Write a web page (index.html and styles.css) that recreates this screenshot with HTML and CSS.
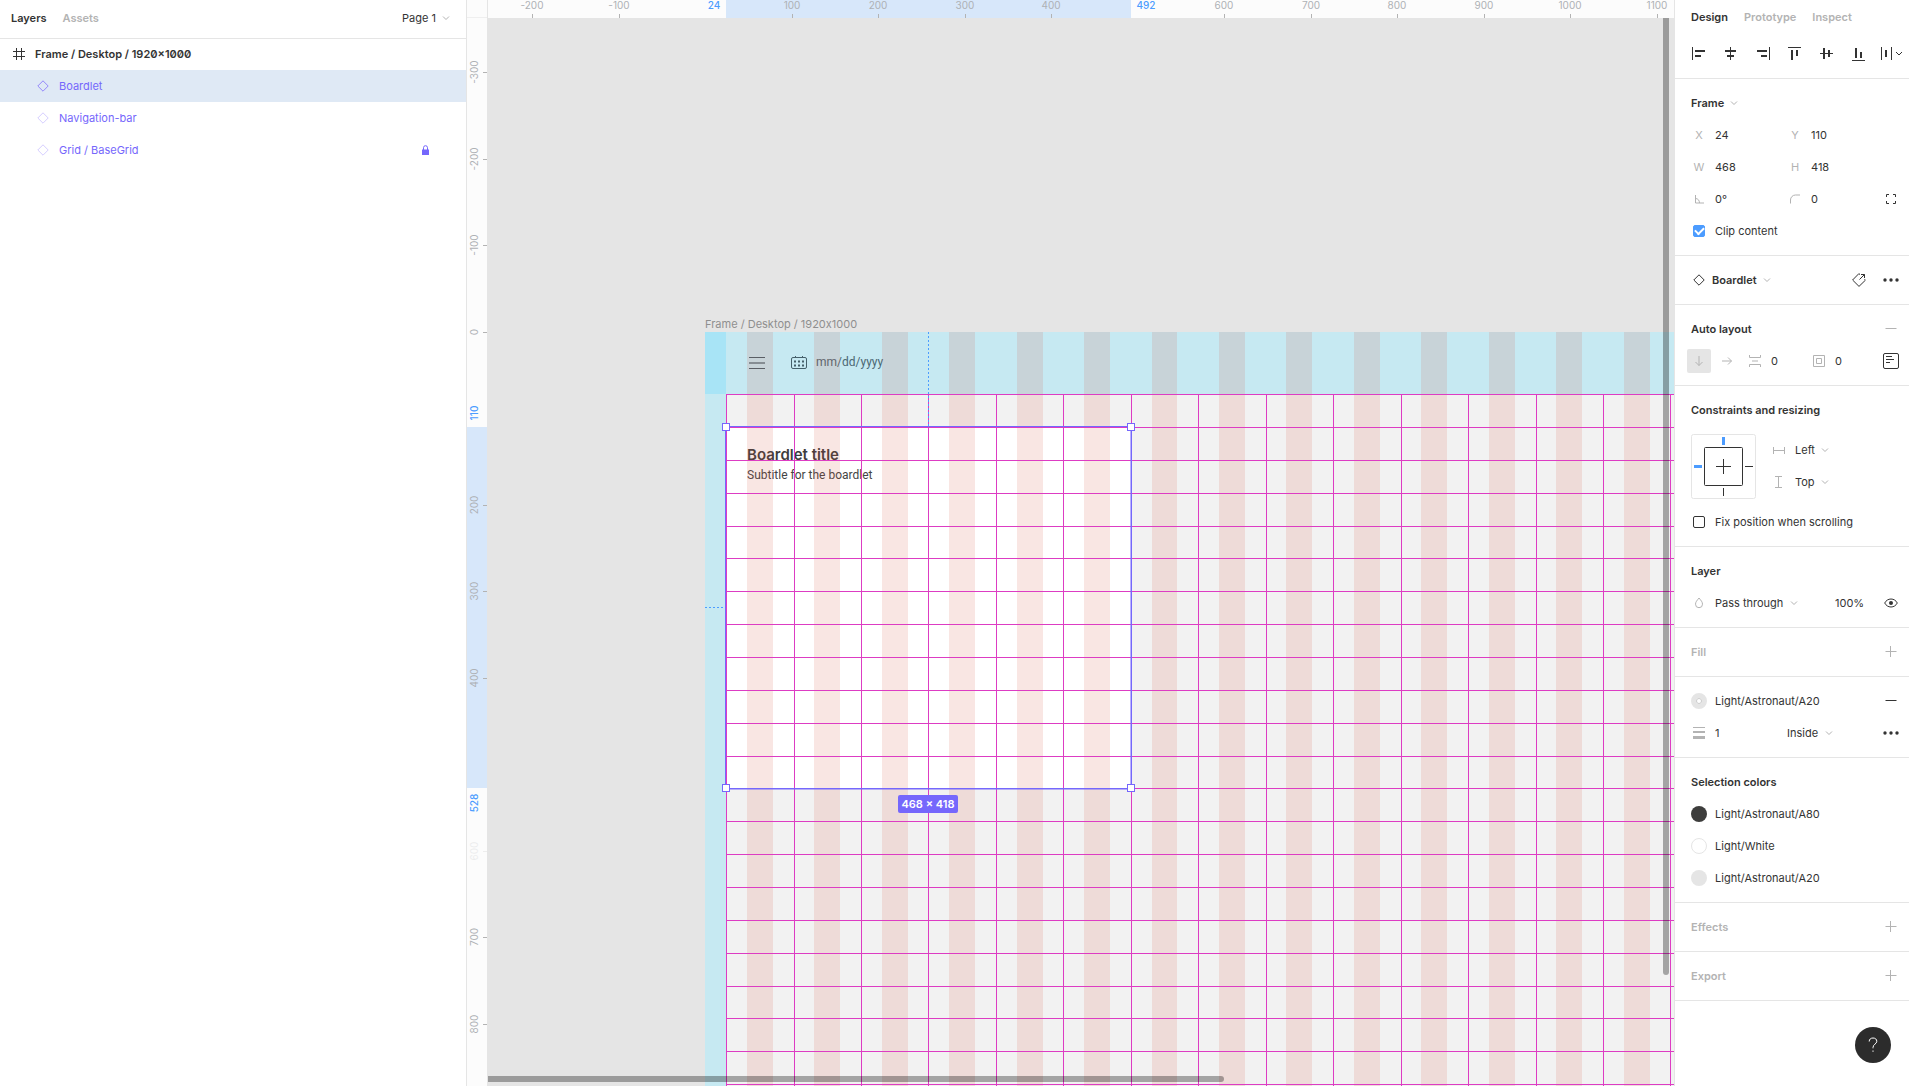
FILE: index.html
```html
<!DOCTYPE html>
<html lang="en">
<head>
<meta charset="utf-8">
<title>Frame / Desktop</title>
<link rel="stylesheet" href="styles.css">
</head>
<body>
<div class="app">

  <aside class="layers">
    <header class="layers-head">
      <div class="tabs">
        <button class="tab tab-on">Layers</button>
        <button class="tab">Assets</button>
      </div>
      <button class="drop">Page 1 <svg class="chev" viewBox="0 0 8 8"><path d="M1 2.500l3 3 3-3"/></svg></button>
    </header>
    <ul class="tree">
      <li class="node node-root">
        <svg class="ico s12" viewBox="0 0 12 12"><path d="M3.500 0v12M8.500 0v12M0 3.500h12M0 8.500h12"/></svg>
        <span>Frame / Desktop / 1920×1000</span>
      </li>
      <li class="node node-on">
        <svg class="ico s12" viewBox="0 0 12 12"><path d="M6 .8L11.200 6 6 11.200.8 6z"/></svg>
        <span>Boardlet</span>
      </li>
      <li class="node">
        <svg class="ico s12" viewBox="0 0 12 12"><path d="M6 .8L11.200 6 6 11.200.8 6z"/></svg>
        <span>Navigation-bar</span>
      </li>
      <li class="node">
        <svg class="ico s12" viewBox="0 0 12 12"><path d="M6 .8L11.200 6 6 11.200.8 6z"/></svg>
        <span>Grid / BaseGrid</span>
        <svg class="lock" viewBox="0 0 7 10"><path class="lock-body" d="M0 4.500h7V10H0z"/><path d="M1.500 5V2.700a2 2 0 0 1 4 0V5"/></svg>
      </li>
    </ul>
  </aside>

  <main class="stage">
    <div class="corner"></div>
    <div class="ruler ruler-h">
      <svg class="fill">
        <rect class="r-range" x="239" y="0" width="405" height="18"/>
        <path class="r-tick" d="M45.500 14v4M132.500 14v4M305.500 14v4M391.500 14v4M478.500 14v4M564.500 14v4M737.500 14v4M824.500 14v4M910.500 14v4M997.500 14v4M1083.500 14v4M1170.500 14v4"/>
        <g class="r-num">
          <text x="45" y="9">-200</text><text x="132" y="9">-100</text>
          <text x="305" y="9">100</text><text x="391" y="9">200</text><text x="478" y="9">300</text><text x="564" y="9">400</text>
          <text x="737" y="9">600</text><text x="824" y="9">700</text><text x="910" y="9">800</text><text x="997" y="9">900</text><text x="1083" y="9">1000</text><text x="1170" y="9">1100</text>
        </g>
        <g class="r-num r-sel"><text x="227" y="9">24</text><text x="659" y="9">492</text></g>
      </svg>
    </div>
    <div class="ruler">
      <svg class="fill">
        <rect class="r-range" x="0" y="409" width="20" height="361"/>
        <path class="r-tick" d="M16 54.500h4M16 141.500h4M16 227.500h4M16 314.500h4M16 487.500h4M16 573.500h4M16 660.500h4M16 919.500h4M16 1006.500h4"/>
        <path class="r-tick r-faint" d="M16 833.500h4"/>
        <g class="r-num">
          <text transform="translate(11 54) rotate(-90)">-300</text>
          <text transform="translate(11 141) rotate(-90)">-200</text>
          <text transform="translate(11 227) rotate(-90)">-100</text>
          <text transform="translate(11 314) rotate(-90)">0</text>
          <text transform="translate(11 487) rotate(-90)">200</text>
          <text transform="translate(11 573) rotate(-90)">300</text>
          <text transform="translate(11 660) rotate(-90)">400</text>
          <text class="r-faint" transform="translate(11 833) rotate(-90)">600</text>
          <text transform="translate(11 919) rotate(-90)">700</text>
          <text transform="translate(11 1006) rotate(-90)">800</text>
        </g>
        <g class="r-num r-sel">
          <text transform="translate(11 395) rotate(-90)">110</text>
          <text transform="translate(11 785) rotate(-90)">528</text>
        </g>
      </svg>
    </div>

    <div class="canvas">
      <svg class="fill">
        <!-- origin: top left corner of the frame -->
        <g transform="translate(218 314)">
          <text class="c-label" x="0" y="-4">Frame / Desktop / 1920x1000</text>
          <rect class="c-frame" width="1660" height="865"/>
          <rect class="c-board" x="21" y="95" width="405" height="361"/>
          <text class="c-title" x="42" y="128">Boardlet title</text>
          <text class="c-sub" x="42" y="147">Subtitle for the boardlet</text>

          <rect class="c-cyan" width="1660" height="62"/>
          <rect class="c-cyan" y="62" width="21" height="803"/>
          <rect class="c-cyan2" width="21" height="62"/>
          <g class="c-nav">
            <path d="M44 25.500h16M44 36.500h16"/>
            <path class="c-mid" d="M44 31h16"/>
            <rect x="86.500" y="25.500" width="15" height="11" rx="1.500"/>
            <path d="M90.500 24v2M97.500 24v2"/>
            <path class="c-dots" d="M89 29.500h2M93 29.500h2M97 29.500h2M89 33.500h2M93 33.500h2M97 33.500h2"/>
          </g>
          <text class="c-date" x="111" y="34">mm/dd/yyyy</text>

          <path class="c-cols" d="M42 0h26v865h-26zM109 0h26v865h-26zM177 0h26v865h-26zM244 0h26v865h-26zM312 0h26v865h-26zM379 0h26v865h-26zM447 0h25v865h-25zM514 0h26v865h-26zM581 0h26v865h-26zM649 0h26v865h-26zM716 0h26v865h-26zM784 0h26v865h-26zM851 0h26v865h-26zM919 0h26v865h-26z"/>
          <path class="c-lines" d="M21.500 62v803M89.500 62v803M156.500 62v803M223.500 62v803M291.500 62v803M358.500 62v803M426.500 62v803M493.500 62v803M561.500 62v803M628.500 62v803M696.500 62v803M763.500 62v803M831.500 62v803M898.500 62v803M965.500 62v803"/>
          <path class="c-lines" d="M21 62.500h1639M21 95.500h1639M21 128.500h1639M21 161.500h1639M21 194.500h1639M21 226.500h1639M21 259.500h1639M21 292.500h1639M21 325.500h1639M21 358.500h1639M21 391.500h1639M21 424.500h1639M21 456.500h1639M21 489.500h1639M21 522.500h1639M21 555.500h1639M21 588.500h1639M21 621.500h1639M21 654.500h1639M21 686.500h1639M21 719.500h1639M21 752.500h1639M21 785.500h1639M21 818.500h1639M21 851.500h1639"/>

          <path class="c-dash" d="M223.500 0v94M0 275.500h20"/>
          <path class="c-sel c-sel-soft" d="M425.500 95v361M21 457.500h405"/>
          <path class="c-sel" d="M20.500 94.500H426.500V456.500H20.500z"/>
          <g class="c-handle">
            <rect x="17.500" y="91.500" width="7" height="7"/>
            <rect x="422.500" y="91.500" width="7" height="7"/>
            <rect x="17.500" y="452.500" width="7" height="7"/>
            <rect x="422.500" y="452.500" width="7" height="7"/>
          </g>
          <rect class="c-badge" x="193" y="463" width="60" height="18" rx="2"/>
          <text class="c-size" x="223" y="476">468 × 418</text>
        </g>
      </svg>
      <div class="bar bar-v"></div>
      <div class="bar bar-h"></div>
    </div>
  </main>

  <aside class="props">
    <div class="tabs props-tabs">
      <button class="tab tab-on">Design</button>
      <button class="tab">Prototype</button>
      <button class="tab">Inspect</button>
    </div>
    <div class="align">
      <button class="cell" aria-label="Align left"><svg class="s14" viewBox="0 0 14 14"><path d="M0 0h1v13H0zM3 3h10v2H3zM3 8h6v2H3z"/></svg></button>
      <button class="cell" aria-label="Align horizontal centers"><svg class="s14" viewBox="0 0 14 14"><path d="M6 0h1v3h5v2H7v3h3v2H7v3H6v-3H3V8h3V5H1V3h5z"/></svg></button>
      <button class="cell" aria-label="Align right"><svg class="s14" viewBox="0 0 14 14"><path d="M13 0h1v13h-1zM1 3h10v2H1zM5 8h6v2H5z"/></svg></button>
      <button class="cell" aria-label="Align top"><svg class="s14" viewBox="0 0 14 14"><path d="M0 0h13v1H0zM3 3h2v10H3zM8 3h2v6H8z"/></svg></button>
      <button class="cell" aria-label="Align vertical centers"><svg class="s14" viewBox="0 0 14 14"><path d="M0 6h3V1h2v5h3V3h2v3h3v1h-3v3H8V7H5v5H3V7H0z"/></svg></button>
      <button class="cell" aria-label="Align bottom"><svg class="s14" viewBox="0 0 14 14"><path d="M0 13h13v1H0zM3 1h2v10H3zM8 5h2v6H8z"/></svg></button>
      <button class="cell" aria-label="Distribute"><svg class="s24" viewBox="0 0 24 14"><path d="M2 0h1v13H2zM6 3h2v7H6zM12 0h1v13h-1z"/><path class="line" d="M17 5l3 3 3-3"/></svg></button>
    </div>

    <section class="group">
      <div class="head"><button class="drop strong">Frame <svg class="chev" viewBox="0 0 8 8"><path d="M1 2.500l3 3 3-3"/></svg></button></div>
      <div class="row pair">
        <label class="cell tag" for="px">X</label><input id="px" value="24">
        <label class="cell tag" for="py">Y</label><input id="py" value="110">
      </div>
      <div class="row pair">
        <label class="cell tag" for="pw">W</label><input id="pw" value="468">
        <label class="cell tag" for="ph">H</label><input id="ph" value="418">
      </div>
      <div class="row pair">
        <label class="cell" for="pr" aria-label="Rotation"><svg class="ico pale s10" viewBox="0 0 10 10"><path d="M1.500 1v8H10M1.500 4.500c2.500 0 4 2 4 4.500"/></svg></label><input id="pr" value="0°">
        <label class="cell" for="pc" aria-label="Corner radius"><svg class="ico pale s10" viewBox="0 0 10 10"><path d="M.5 9.500V6a5 5 0 0 1 5-5H10"/></svg></label><input id="pc" value="0">
        <button class="cell" aria-label="Independent corners"><svg class="ico s10" viewBox="0 0 10 10"><path d="M.5 3V.5H3M7 .5h2.500V3M9.500 7v2.500H7M3 9.500H.5V7"/></svg></button>
      </div>
      <label class="row check"><span class="cell"><input type="checkbox" class="tick" checked></span>Clip content</label>
    </section>

    <section class="group">
      <div class="row comp">
        <span class="cell"><svg class="ico s12" viewBox="0 0 12 12"><path d="M6 .8L11.200 6 6 11.200.8 6z"/></svg></span>
        <button class="drop strong">Boardlet <svg class="chev" viewBox="0 0 8 8"><path d="M1 2.500l3 3 3-3"/></svg></button>
        <button class="cell" aria-label="Go to main component"><svg class="ico s14" viewBox="0 0 14 14"><path d="M8 1.500L6.800.7.6 7 7 13.400 13.400 7.200 12.500 6.300M7.500 6.500L12.500 1.500M9 1.500h3.500V5"/></svg></button>
        <button class="cell" aria-label="More"><svg class="dots" viewBox="0 0 16 4"><circle cx="2" cy="2" r="1.700"/><circle cx="8" cy="2" r="1.700"/><circle cx="14" cy="2" r="1.700"/></svg></button>
      </div>
    </section>

    <section class="group">
      <div class="head"><h2>Auto layout</h2><button class="cell" aria-label="Remove auto layout"><svg class="ico pale s12" viewBox="0 0 12 12"><path d="M.5 5.500h11"/></svg></button></div>
      <div class="row auto">
        <button class="dir dir-on" aria-label="Vertical"><svg class="ico pale s10" viewBox="0 0 10 10"><path d="M5 0v9.500M1.500 6L5 9.500 8.500 6"/></svg></button>
        <button class="dir" aria-label="Horizontal"><svg class="ico pale s10" viewBox="0 0 10 10"><path d="M0 5h9.500M6 1.500L9.500 5 6 8.500"/></svg></button>
        <label class="cell" for="gap" aria-label="Spacing"><svg class="ico pale s12" viewBox="0 0 12 12"><path d="M.5 0v2.500h11V0M.5 12V9.500h11V12M3 6h6"/></svg></label><input id="gap" value="0">
        <label class="cell" for="pad" aria-label="Padding"><svg class="ico pale s12" viewBox="0 0 12 12"><path d="M.5.5h11v11H.5zM3.500 3.500h5v5h-5z"/></svg></label><input id="pad" value="0">
        <button class="cell" aria-label="Alignment"><svg class="ico s16" viewBox="0 0 16 16"><rect x=".5" y=".5" width="15" height="15" rx="1.500"/><path d="M3 3.500h6M3 6.500h8M3 9.500h4"/></svg></button>
      </div>
    </section>

    <section class="group">
      <div class="head"><h2>Constraints and resizing</h2></div>
      <div class="pins">
        <svg class="pinbox" viewBox="0 0 65 65">
          <rect class="pin-edge" x=".5" y=".5" width="64" height="64" rx="2"/>
          <rect x="13.500" y="13.500" width="38" height="38" rx="1"/>
          <path d="M32.500 25v15M25 32.500h15M32.500 54v8M54 32.500h8"/>
          <path class="pin-on" d="M32.500 3v8M3 32.500h8"/>
        </svg>
        <div class="pinfields">
          <div class="row"><label class="cell" for="ch" aria-label="Horizontal constraint"><svg class="ico pale s12" viewBox="0 0 12 12"><path d="M.5 3v7M11.500 3v7M.5 6.500h11"/></svg></label><span class="drop"><select id="ch"><option>Left</option></select><svg class="chev" viewBox="0 0 8 8"><path d="M1 2.500l3 3 3-3"/></svg></span></div>
          <div class="row"><label class="cell" for="cv" aria-label="Vertical constraint"><svg class="ico pale s12" viewBox="0 0 12 12"><path d="M2 .5h7M2 11.500h7M5.500.5v11"/></svg></label><span class="drop"><select id="cv"><option>Top</option></select><svg class="chev" viewBox="0 0 8 8"><path d="M1 2.500l3 3 3-3"/></svg></span></div>
        </div>
      </div>
      <label class="row check"><span class="cell"><input type="checkbox" class="tick"></span>Fix position when scrolling</label>
    </section>

    <section class="group">
      <div class="head"><h2>Layer</h2></div>
      <div class="row blend">
        <label class="cell" for="bm" aria-label="Blend mode"><svg class="ico pale s12" viewBox="0 0 12 12"><path d="M6 1c2 2.500 3.500 4 3.500 6.200a3.500 3.500 0 0 1-7 0C2.500 5 4 3.500 6 1z"/></svg></label>
        <span class="drop"><select id="bm"><option>Pass through</option></select><svg class="chev" viewBox="0 0 8 8"><path d="M1 2.500l3 3 3-3"/></svg></span>
        <input value="100%" aria-label="Opacity">
        <button class="cell" aria-label="Toggle visibility"><svg class="ico s14" viewBox="0 0 14 14"><path d="M.7 7C2 4.500 4.300 3 7 3s5 1.500 6.300 4C12 9.500 9.700 11 7 11S2 9.500.7 7z"/><circle class="solid" cx="7" cy="7" r="2"/></svg></button>
      </div>
    </section>

    <section class="group">
      <div class="head"><h2 class="off">Fill</h2><button class="cell" aria-label="Add fill"><svg class="ico pale s12" viewBox="0 0 12 12"><path d="M.5 5.500h11M5.500 0v11"/></svg></button></div>
    </section>

    <section class="group">
      <div class="head"><span class="style"><i class="swatch ring"></i>Light/Astronaut/A20</span><button class="cell" aria-label="Remove stroke"><svg class="ico s12" viewBox="0 0 12 12"><path d="M.5 5.500h11"/></svg></button></div>
      <div class="row stroke">
        <label class="cell" for="sw" aria-label="Stroke width"><svg class="weights" viewBox="0 0 12 12"><path d="M0 0h12v1H0zM0 4h12v2H0zM0 9h12v3H0z"/></svg></label><input id="sw" value="1">
        <span class="drop"><select aria-label="Stroke position"><option>Inside</option></select><svg class="chev" viewBox="0 0 8 8"><path d="M1 2.500l3 3 3-3"/></svg></span>
        <button class="cell" aria-label="Advanced stroke"><svg class="dots" viewBox="0 0 16 4"><circle cx="2" cy="2" r="1.700"/><circle cx="8" cy="2" r="1.700"/><circle cx="14" cy="2" r="1.700"/></svg></button>
      </div>
    </section>

    <section class="group">
      <div class="head"><h2>Selection colors</h2></div>
      <div class="head"><span class="style"><i class="swatch ink"></i>Light/Astronaut/A80</span></div>
      <div class="head"><span class="style"><i class="swatch white"></i>Light/White</span></div>
      <div class="head"><span class="style"><i class="swatch"></i>Light/Astronaut/A20</span></div>
    </section>

    <section class="group">
      <div class="head"><h2 class="off">Effects</h2><button class="cell" aria-label="Add effect"><svg class="ico pale s12" viewBox="0 0 12 12"><path d="M.5 5.500h11M5.500 0v11"/></svg></button></div>
    </section>
    <section class="group">
      <div class="head"><h2 class="off">Export</h2><button class="cell" aria-label="Add export"><svg class="ico pale s12" viewBox="0 0 12 12"><path d="M.5 5.500h11M5.500 0v11"/></svg></button></div>
    </section>
  </aside>

  <button class="help" aria-label="Help"><svg viewBox="0 0 12 16"><path d="M2.200 4.500C2.200 2.300 3.700 1 6 1s3.800 1.300 3.800 3.300C9.800 7 6 7.200 6 10.500v.8"/><path d="M6 13.500v1.300"/></svg></button>
</div>
</body>
</html>
```
FILE: styles.css
```css
* { box-sizing: border-box; }

body {
  margin: 0;
  background: #fff;
  color: #333;
  font: 11px/16px Inter, sans-serif;
}

button, input, select {
  margin: 0;
  padding: 0;
  border: 0;
  background: none;
  color: inherit;
  font: inherit;
  appearance: none;
}
input { width: 100%; min-width: 0; }
h2 { margin: 0; font: inherit; font-weight: 600; }
svg { display: block; flex: none; fill: #333; }

.app {
  position: relative;
  display: grid;
  grid-template-columns: 467px minmax(0, 1fr) 235px;
  height: 100vh;
  min-height: 1002px;
  overflow: hidden;
}

/* shared pieces */
.tabs { display: flex; gap: 16px; }
.tab { color: #b3b3b3; font-weight: 600; }
.tab-on { color: #333; }
.drop { display: flex; align-items: center; gap: 6px; }
.strong, .node-root { font-weight: 600; }
.chev { width: 8px; height: 8px; fill: none; stroke: #b3b3b3; }
.ico { fill: none; stroke: #333; }
.pale { stroke: #b3b3b3; }
.s10 { width: 10px; height: 10px; }
.s12 { width: 12px; height: 12px; }
.s14 { width: 14px; height: 14px; }
.s16 { width: 16px; height: 16px; }
.s24 { width: 24px; height: 14px; }
.solid { fill: #333; stroke: none; }

/* layers panel */
.layers { border-right: 1px solid #e5e5e5; }
.layers-head {
  display: flex;
  justify-content: space-between;
  height: 39px;
  padding: 10px 16px 12px 11px;
  border-bottom: 1px solid #e5e5e5;
}
.tree { margin: 0; padding: 0; list-style: none; }
.node {
  display: flex;
  align-items: center;
  gap: 10px;
  height: 32px;
  padding: 0 37px;
  color: #7567fc;
}
.node .ico { stroke: #d5ceff; }
.node-root {
  height: 31px;
  padding: 0 13px 1px;
  color: #333;
  font-variant-numeric: slashed-zero;
}
.node-root .ico { stroke: #333; }
.node-on { background: #dfe9f5; }
.node-on .ico { stroke: #9488fb; }
.lock { width: 7px; height: 10px; margin-left: auto; fill: none; stroke: #7567fc; }
.lock-body { fill: #7567fc; stroke: none; }

/* rulers */
.stage {
  display: grid;
  grid-template: 18px minmax(0, 1fr) / 20px minmax(0, 1fr);
  min-width: 0;
}
.fill { width: 100%; height: 100%; }
.corner { background: #fcfcfc; box-shadow: inset 0 -1px #efefef; }
.ruler { overflow: hidden; background: #fcfcfc; }
.ruler-h { box-shadow: inset 1px 0 #e5e5e5; }
.r-range { fill: #d7e7fa; }
.r-tick { stroke: #b3b3b3; }
.r-num { fill: #aeb1b5; font-size: 10px; text-anchor: middle; }
.r-sel { fill: #4c9cff; font-weight: 500; }
.r-faint { opacity: 0.2; }

/* canvas */
.canvas { position: relative; overflow: hidden; background: #e5e5e5; }
.c-label { fill: #8f8f8f; font-size: 11px; font-variant-ligatures: no-contextual; }
.c-frame { fill: #f2f2f2; }
.c-board { fill: #fff; }
.c-title { fill: #3d3d3d; font-size: 15px; font-weight: 600; }
.c-sub { fill: #444; font: 12px Roboto, sans-serif; }
.c-date { fill: #4b6773; font: 12px Roboto, sans-serif; }
.c-cyan { fill: #c6e9f2; }
.c-cyan2 { fill: #a8e4f6; }
.c-nav { fill: none; stroke: #45606b; }
.c-mid { stroke-width: 2; opacity: 0.6; }
.c-dots { stroke-width: 2; }
.c-cols { fill: rgba(215, 88, 68, 0.15); }
.c-lines { fill: none; stroke: #dd3cc3; }
.c-dash { fill: none; stroke: #4c9cff; stroke-dasharray: 2 2; }
.c-sel { fill: none; stroke: #7567fc; }
.c-sel-soft { opacity: 0.5; }
.c-handle { fill: #fff; stroke: #7567fc; }
.c-badge { fill: #7567fc; }
.c-size { fill: #fff; font-size: 11px; font-weight: 600; text-anchor: middle; }
.bar { position: absolute; background: rgba(0, 0, 0, 0.32); }
.bar-v { top: 0; right: 5px; width: 6px; height: 957px; border-radius: 0 0 3px 3px; }
.bar-h { left: 1px; bottom: 4px; width: 736px; height: 6px; border-radius: 0 3px 3px 0; }

/* properties panel */
.props { border-left: 1px solid #e5e5e5; }
.props-tabs { height: 37px; padding: 9px 16px 12px; }
.align {
  display: flex;
  height: 42px;
  padding: 0 0 8px 8px;
  border-bottom: 1px solid #e5e5e5;
}
.align .cell { height: 34px; }
.align .line { fill: none; stroke: #333; }
.cell {
  display: flex;
  align-items: center;
  justify-content: center;
  width: 32px;
  height: 32px;
  flex: none;
}
.group { padding: 8px 0 8px 8px; border-bottom: 1px solid #e5e5e5; }
.head {
  display: flex;
  align-items: center;
  height: 32px;
  padding-left: 8px;
}
.head > .cell { margin: 0 2px 0 auto; }
.off { color: #b3b3b3; }
.row { display: grid; align-items: center; height: 32px; }
.pair { grid-template-columns: 32px 64px 32px 64px 32px; }
.check { grid-template-columns: 32px 1fr; }
.comp { grid-template-columns: 29px 131px 32px 32px; }
.auto { grid-template-columns: 28px 28px 32px 32px 32px 40px 32px; }
.blend { grid-template-columns: 32px 120px 40px 32px; }
.stroke { grid-template-columns: 32px 72px 88px 32px; }
.tag { color: #b3b3b3; }

.tick {
  display: grid;
  place-items: center;
  width: 12px;
  height: 12px;
  border: 1px solid #333;
  border-radius: 2px;
}
.tick:checked { border-color: #4c9cff; background: #4c9cff; }
.tick:checked::before {
  content: "";
  width: 7px;
  height: 4px;
  margin-bottom: 2px;
  border: solid #fff;
  border-width: 0 0 2px 2px;
  transform: rotate(-45deg);
}

.dots { width: 16px; height: 4px; }
.dir {
  display: grid;
  place-items: center;
  width: 24px;
  height: 24px;
  margin-left: 4px;
  border-radius: 2px;
}
.dir-on { background: #e5e5e5; }

.pins { display: flex; gap: 7px; height: 80px; padding: 8px; }
.pinbox { width: 65px; height: 65px; fill: none; stroke: #333; }
.pin-edge { stroke: #e5e5e5; }
.pin-on { stroke: #4c9cff; stroke-width: 3; }
.pinfields .row { grid-template-columns: 32px 1fr; }

.style { display: flex; align-items: center; gap: 8px; }
.swatch { width: 16px; height: 16px; border-radius: 50%; background: #e5e5e5; }
.ring { border: 5px solid #e5e5e5; background: #fff; box-shadow: inset 0 0 0 1px #ccc; }
.ink { background: #3d3d3c; }
.white { border: 1px solid #e5e5e5; background: #fff; }
.weights { width: 12px; height: 12px; fill: #b3b3b3; }

.help {
  position: absolute;
  right: 18px;
  bottom: 23px;
  display: grid;
  place-items: center;
  width: 36px;
  height: 36px;
  border-radius: 50%;
  background: #2c2c2c;
}
.help svg { width: 12px; height: 16px; fill: none; stroke: #fff; }
```
